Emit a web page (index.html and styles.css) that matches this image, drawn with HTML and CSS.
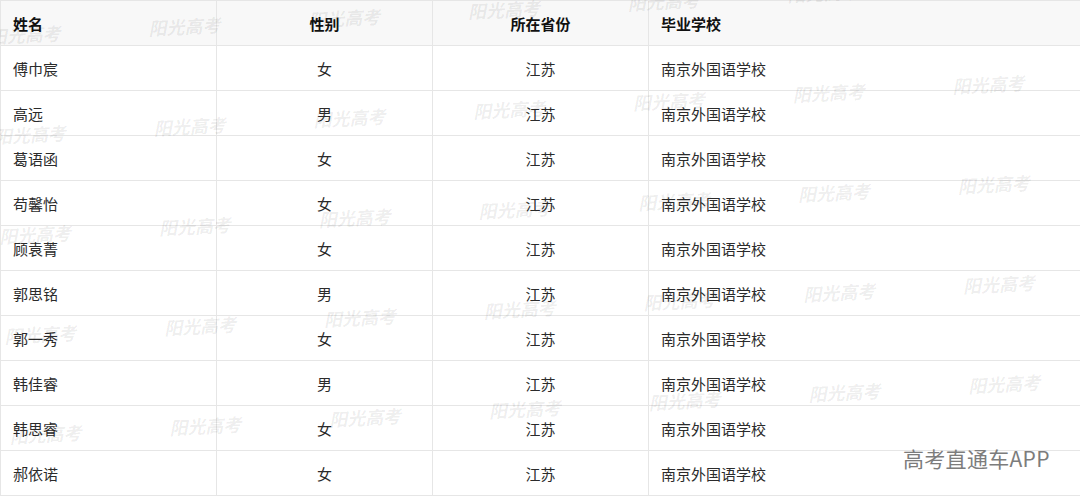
FILE: index.html
```html
<!DOCTYPE html>
<html lang="zh-CN">
<head>
    <meta charset="UTF-8">
    <meta name="viewport" content="width=device-width, initial-scale=1.0">
    <title>南京外国语学校</title>
    <link rel="stylesheet" href="styles.css">
</head>
<body>

    <div class="sheet">
        <table class="list">
            <colgroup>
                <col class="c-name">
                <col class="c-sex">
                <col class="c-prov">
                <col class="c-school">
            </colgroup>
            <thead>
                <tr>
                    <th class="left">姓名</th>
                    <th>性别</th>
                    <th>所在省份</th>
                    <th class="left">毕业学校</th>
                </tr>
            </thead>
            <tbody>
                <tr><td class="left">傅巾宸</td><td>女</td><td>江苏</td><td class="left">南京外国语学校</td></tr>
                <tr><td class="left">高远</td><td>男</td><td>江苏</td><td class="left">南京外国语学校</td></tr>
                <tr><td class="left">葛语函</td><td>女</td><td>江苏</td><td class="left">南京外国语学校</td></tr>
                <tr><td class="left">苟馨怡</td><td>女</td><td>江苏</td><td class="left">南京外国语学校</td></tr>
                <tr><td class="left">顾袁菁</td><td>女</td><td>江苏</td><td class="left">南京外国语学校</td></tr>
                <tr><td class="left">郭思铭</td><td>男</td><td>江苏</td><td class="left">南京外国语学校</td></tr>
                <tr><td class="left">郭一秀</td><td>女</td><td>江苏</td><td class="left">南京外国语学校</td></tr>
                <tr><td class="left">韩佳睿</td><td>男</td><td>江苏</td><td class="left">南京外国语学校</td></tr>
                <tr><td class="left">韩思睿</td><td>女</td><td>江苏</td><td class="left">南京外国语学校</td></tr>
                <tr><td class="left">郝依诺</td><td>女</td><td>江苏</td><td class="left">南京外国语学校</td></tr>
            </tbody>
        </table>

        <!-- 水印层 -->
        <div class="marks">
            <span>阳光高考</span><span>阳光高考</span><span>阳光高考</span><span>阳光高考</span><span>阳光高考</span><span>阳光高考</span><span>阳光高考</span>
            <span>阳光高考</span><span>阳光高考</span><span>阳光高考</span><span>阳光高考</span><span>阳光高考</span><span>阳光高考</span><span>阳光高考</span>
            <span>阳光高考</span><span>阳光高考</span><span>阳光高考</span><span>阳光高考</span><span>阳光高考</span><span>阳光高考</span><span>阳光高考</span>
            <span>阳光高考</span><span>阳光高考</span><span>阳光高考</span><span>阳光高考</span><span>阳光高考</span><span>阳光高考</span><span>阳光高考</span>
            <span>阳光高考</span><span>阳光高考</span><span>阳光高考</span><span>阳光高考</span><span>阳光高考</span><span>阳光高考</span><span>阳光高考</span>
        </div>

        <div class="source">高考直通车APP</div>
    </div>

</body>
</html>
```

FILE: styles.css
```css
body { margin: 0; background: #fff; font-family: "Noto Sans CJK SC", "Liberation Sans", sans-serif; }
.sheet { position: relative; width: 1080px; height: 497px; overflow: hidden; }

.list { width: 1080px; border-collapse: collapse; table-layout: fixed; font-size: 15px; color: #2b2b2b; }
.c-name, .c-sex, .c-prov { width: 216px; }
.c-school { width: 432px; }
.list th, .list td { height: 44px; padding: 0 12px; border: 1px solid #e6e6e6; text-align: center; font-weight: normal; }
.list th { background: #f8f8f8; color: #111; font-weight: bold; }
.list .left { text-align: left; }

.marks { position: absolute; left: -12px; top: 26px; display: grid; grid-template-columns: repeat(7, 160px); grid-auto-rows: 100px; transform: rotate(-3deg); transform-origin: 0 0; pointer-events: none; }
.marks span { font-size: 18px; font-weight: bold; font-style: italic; color: rgba(0, 0, 0, 0.075); white-space: nowrap; line-height: 20px; }

.source { position: absolute; left: 903px; top: 443px; font-size: 21px; color: #7c7c7c; letter-spacing: 0.3px; }
```
